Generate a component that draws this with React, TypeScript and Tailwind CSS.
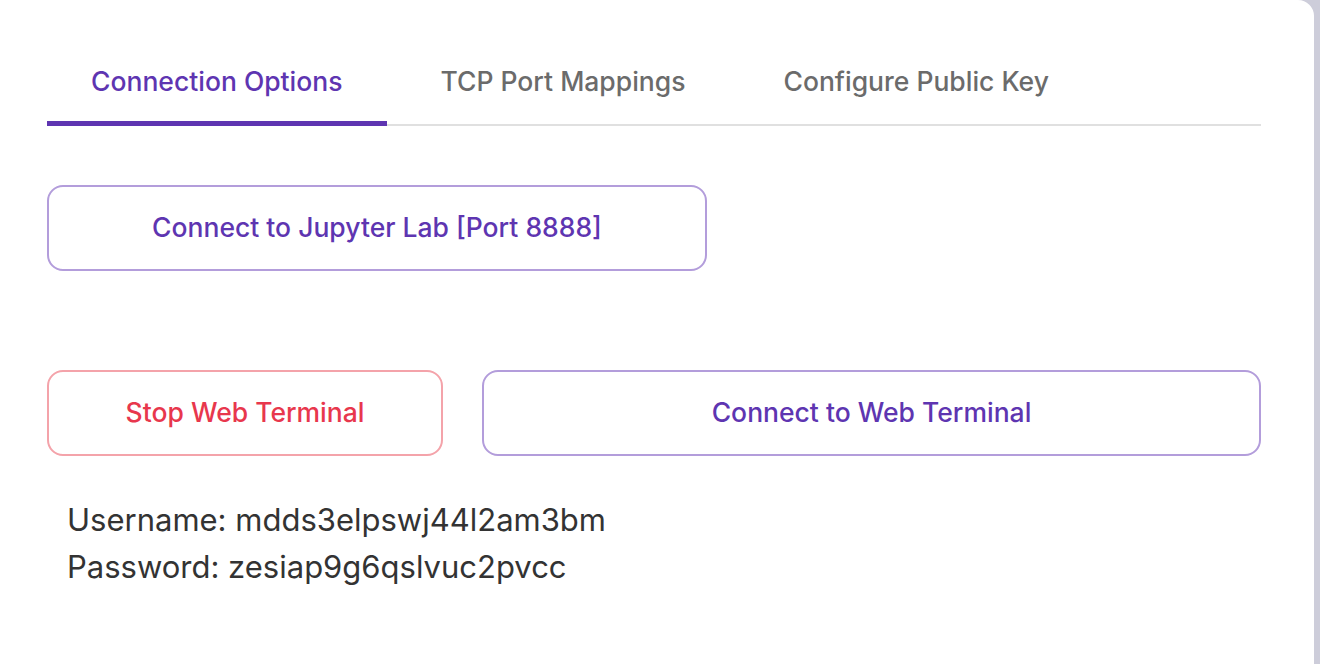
import React from "react";

const tabs = ["Connection Options", "TCP Port Mappings", "Configure Public Key"];

export default function App() {
    const active = 0;

    return (
        <div className="flex h-[664px] w-[1320px] bg-[#cdcdda] font-['Inter',sans-serif]">
            <div className="w-[1314px] shrink-0 bg-white rounded-tr-[16px] pl-[47px] pr-[53px] pt-[48px]">
                <div className="flex gap-[10px] border-b-2 border-[#e0e0e0]">
                    {tabs.map((t, i) => (
                        <div
                            key={t}
                            className={`relative px-[44px] h-[76px] flex items-start pt-[14px] text-[26.5px] font-medium ${
                                i === active ? "text-[#5e35b1]" : "text-[#6b6b6b]"
                            }`}
                        >
                            {t}
                            {i === active && (
                                <div className="absolute left-0 right-0 -bottom-[2px] h-[5px] bg-[#5e35b1]" />
                            )}
                        </div>
                    ))}
                </div>

                <div className="mt-[59px]">
                    <button className="w-[660px] h-[86px] rounded-[16px] border-2 border-[#b39ddb] text-[26.5px] font-medium text-[#5e35b1]">
                        Connect to Jupyter Lab [Port 8888]
                    </button>
                </div>

                <div className="mt-[99px] flex gap-[39px]">
                    <button className="w-[396px] h-[86px] rounded-[16px] border-2 border-[#f4a3aa] text-[26.5px] font-medium text-[#e8374d]">
                        Stop Web Terminal
                    </button>
                    <button className="flex-1 h-[86px] rounded-[16px] border-2 border-[#b39ddb] text-[26.5px] font-medium text-[#5e35b1]">
                        Connect to Web Terminal
                    </button>
                </div>

                <div className="mt-[40px] pl-[20px] text-[31px] leading-[47px] text-[#333333]">
                    <div>Username: mdds3elpswj44l2am3bm</div>
                    <div>Password: zesiap9g6qslvuc2pvcc</div>
                </div>
            </div>
        </div>
    );
}
